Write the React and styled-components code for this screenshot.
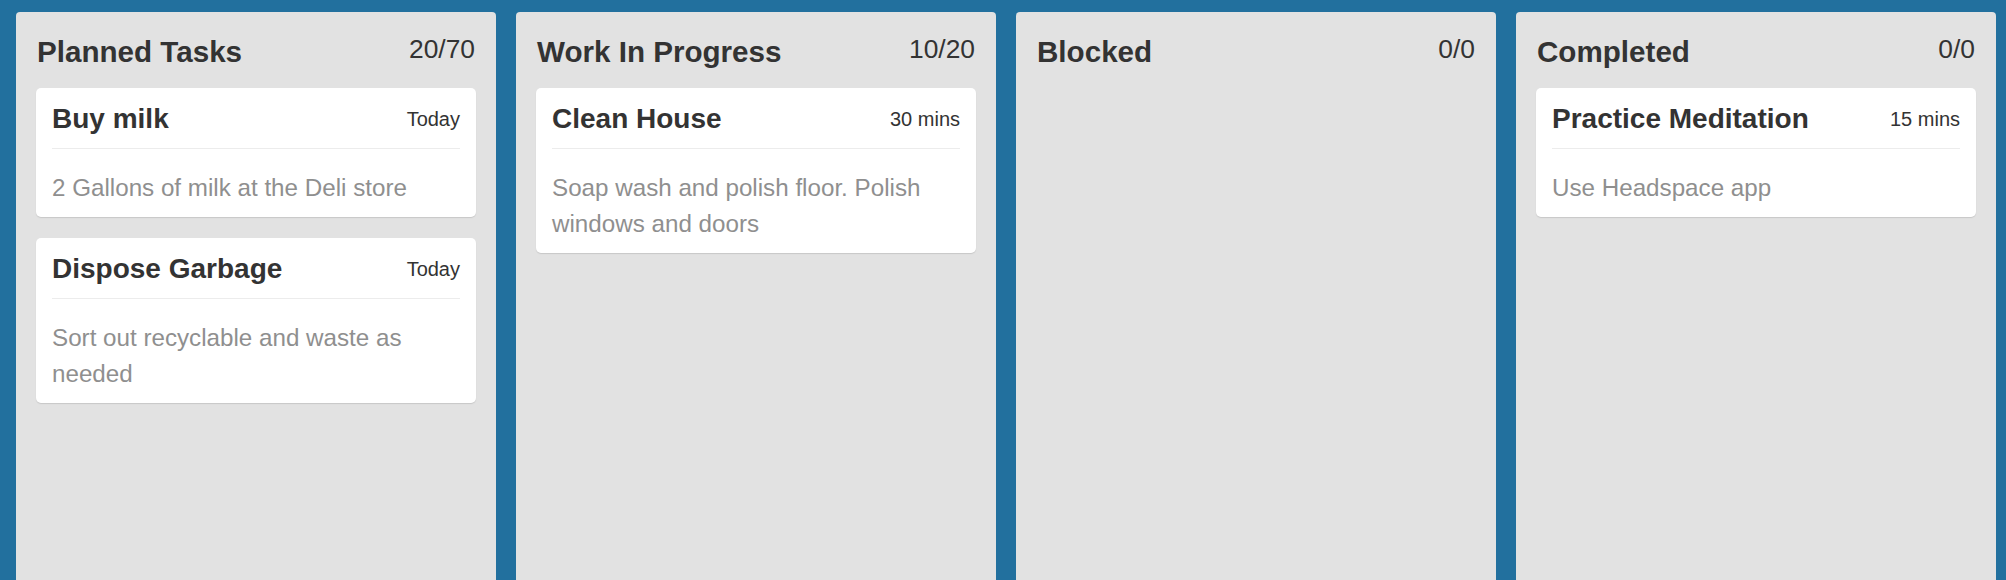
import React from "react";
import styled, { createGlobalStyle } from "styled-components";

const Global = createGlobalStyle`
  html, body { margin: 0; padding: 0; background: #22709e; }
  body { font-family: "Liberation Sans", Arial, Helvetica, sans-serif; color: #333; }
  * { box-sizing: border-box; }
`;

const Board = styled.div`
  display: flex;
  align-items: flex-start;
  gap: 20px;
  padding: 12px 10px 0 16px;
  height: 580px;
  overflow: hidden;
  background: #22709e;
`;

const Lane = styled.section`
  flex: 0 0 480px;
  width: 480px;
  min-height: 600px;
  background: #e2e2e2;
  border-radius: 4px;
  padding: 22px 20px 20px 20px;
  display: flex;
  flex-direction: column;
`;

const LaneHeader = styled.header`
  display: flex;
  justify-content: space-between;
  align-items: center;
  padding: 0 1px 0 1px;
  margin-bottom: 19px;
`;

const LaneTitle = styled.h2`
  margin: 0;
  font-size: 29.6px;
  line-height: 35px;
  font-weight: 700;
  color: #333;
`;

const LaneCount = styled.span`
  font-size: 26.4px;
  line-height: 31px;
  color: #333;
  margin-top: -5px;
`;

const CardList = styled.div`
  display: flex;
  flex-direction: column;
  gap: 21px;
`;

const Card = styled.article`
  background: #fff;
  border-radius: 5px;
  box-shadow: 0 1px 1px #c8c8c8;
  padding: 0 16px;
`;

const CardHeader = styled.div`
  display: flex;
  justify-content: space-between;
  align-items: center;
  padding: 14px 0 13px;
  border-bottom: 1px solid #ececec;
`;

const CardTitle = styled.h3`
  margin: 0;
  font-size: 28px;
  line-height: 33px;
  font-weight: 700;
  color: #333;
`;

const CardMeta = styled.span`
  font-size: 20px;
  line-height: 23px;
  color: #333;
  margin-top: 1px;
`;

const CardBody = styled.p`
  margin: 0;
  padding: 21px 0 11px;
  font-size: 24.2px;
  line-height: 36px;
  color: #8f8f8f;
`;

const lanes = [
  {
    title: "Planned Tasks",
    count: "20/70",
    cards: [
      { title: "Buy milk", meta: "Today", body: "2 Gallons of milk at the Deli store" },
      { title: "Dispose Garbage", meta: "Today", body: "Sort out recyclable and waste as needed" },
    ],
  },
  {
    title: "Work In Progress",
    count: "10/20",
    cards: [
      { title: "Clean House", meta: "30 mins", body: "Soap wash and polish floor. Polish windows and doors" },
    ],
  },
  { title: "Blocked", count: "0/0", cards: [] },
  {
    title: "Completed",
    count: "0/0",
    cards: [
      { title: "Practice Meditation", meta: "15 mins", body: "Use Headspace app" },
    ],
  },
];

export default function App() {
  return (
    <>
      <Global />
      <Board>
        {lanes.map((lane) => (
          <Lane key={lane.title}>
            <LaneHeader>
              <LaneTitle>{lane.title}</LaneTitle>
              <LaneCount>{lane.count}</LaneCount>
            </LaneHeader>
            <CardList>
              {lane.cards.map((c) => (
                <Card key={c.title}>
                  <CardHeader>
                    <CardTitle>{c.title}</CardTitle>
                    <CardMeta>{c.meta}</CardMeta>
                  </CardHeader>
                  <CardBody>{c.body}</CardBody>
                </Card>
              ))}
            </CardList>
          </Lane>
        ))}
      </Board>
    </>
  );
}
